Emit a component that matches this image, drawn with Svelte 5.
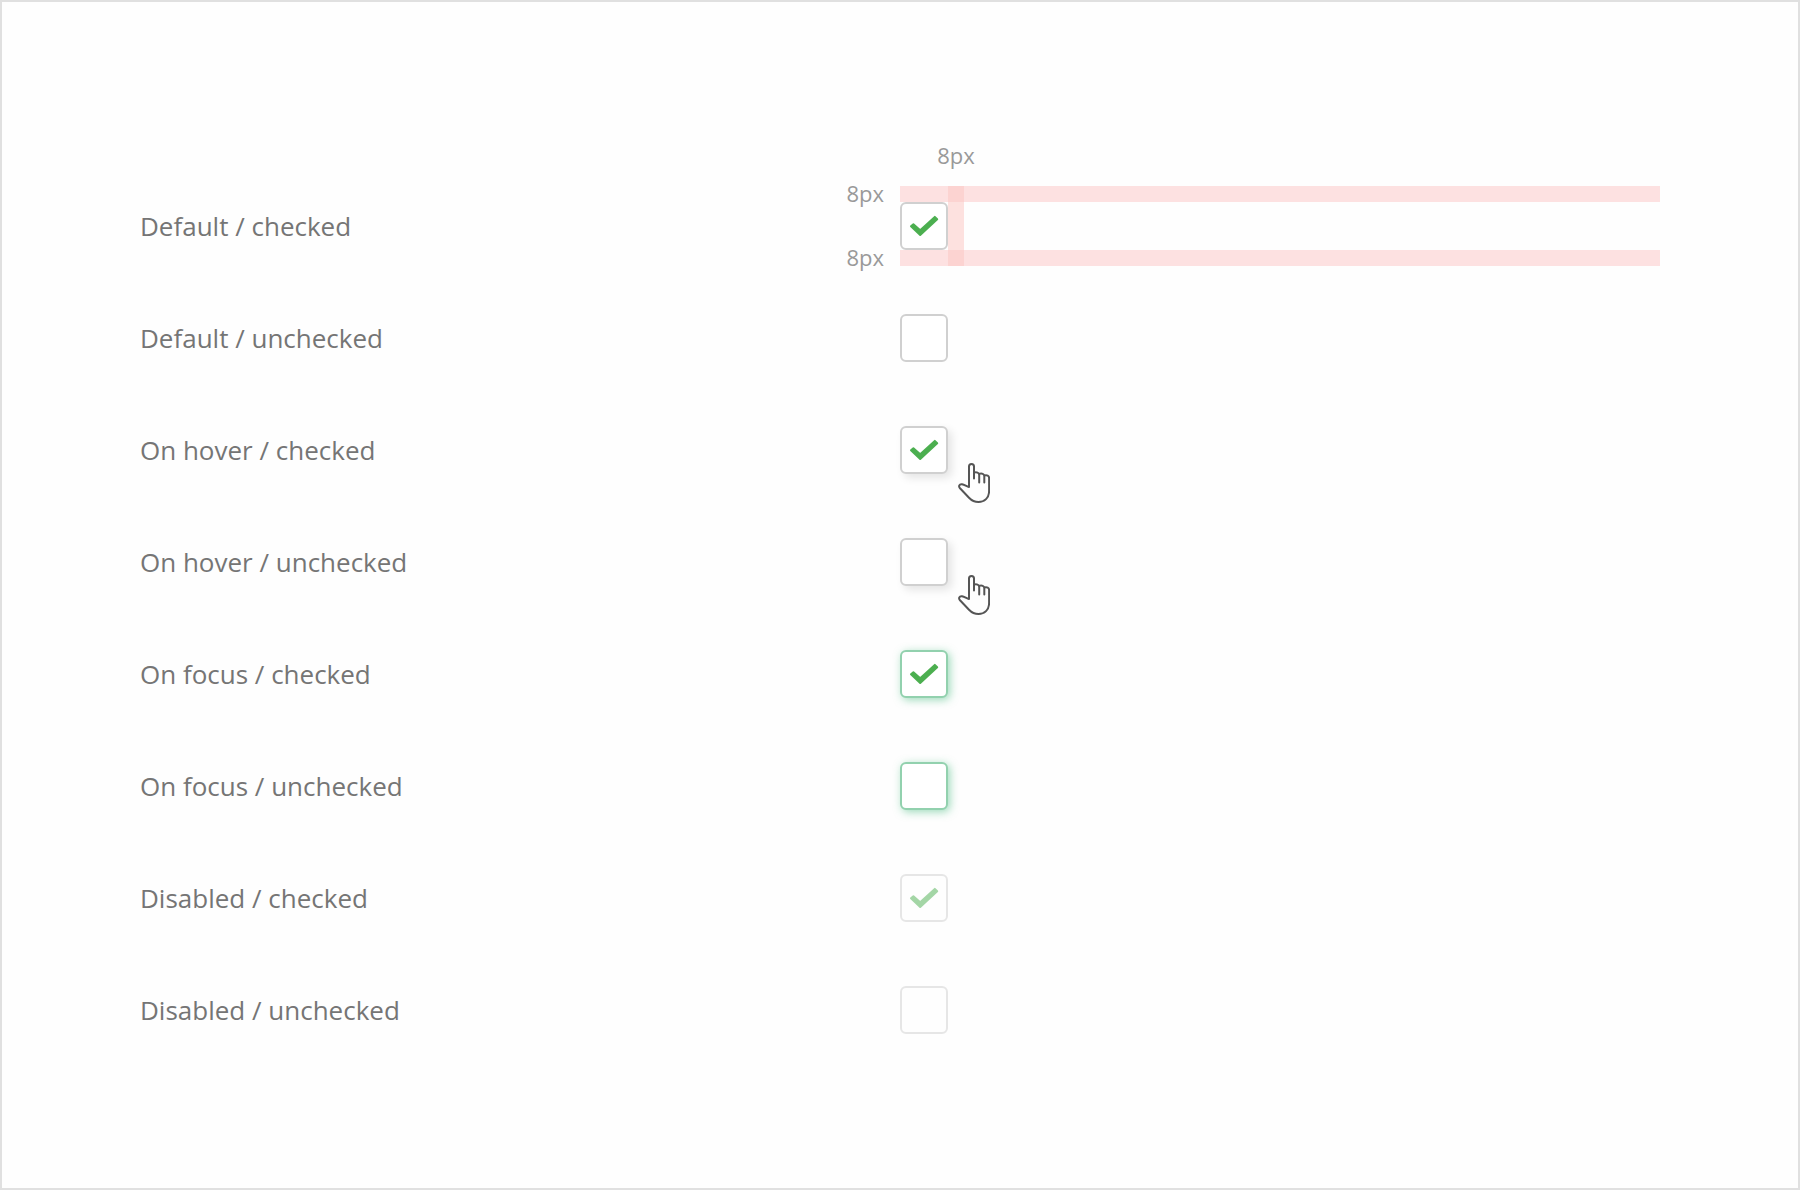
<script>
  const rows = [
    { id: 'default-on', label: 'Default / checked', state: 'default', checked: true, spec: true },
    { id: 'default-off', label: 'Default / unchecked', state: 'default', checked: false },
    { id: 'hover-on', label: 'On hover / checked', state: 'hover', checked: true },
    { id: 'hover-off', label: 'On hover / unchecked', state: 'hover', checked: false },
    { id: 'focus-on', label: 'On focus / checked', state: 'focus', checked: true },
    { id: 'focus-off', label: 'On focus / unchecked', state: 'focus', checked: false },
    { id: 'disabled-on', label: 'Disabled / checked', state: 'disabled', checked: true },
    { id: 'disabled-off', label: 'Disabled / unchecked', state: 'disabled', checked: false }
  ];
</script>

<main class="sheet">
  {#each rows as row (row.id)}
    <div class="row">
      <label for={row.id}>{row.label}</label>
      <div class="cell">
        {#if row.spec}
          <div class="band top"></div>
          <div class="band bottom"></div>
          <div class="band side"></div>
          <span class="note above">8px</span>
          <span class="note upper">8px</span>
          <span class="note lower">8px</span>
        {/if}
        <div class="control {row.state}">
          <input type="checkbox" id={row.id} checked={row.checked} disabled={row.state === 'disabled'} />
          <svg class="tick" viewBox="0 0 48 48" aria-hidden="true">
            <path d="M11 24.200 13.400 22.200 20.200 28.200 34.800 14.900 37.200 17.300 20.200 32.900Z" />
          </svg>
          {#if row.state === 'hover'}
            <svg class="hand" viewBox="0 0 32 40" aria-hidden="true">
              <path
                d="M11 24V3.600a2.500 2.500 0 0 1 5 0V15.500M16 9.600c2.600-.9 5.200.1 5.200 2.400v7.500M21.200 10.900c2.600-.9 5.100.1 5.100 2.300v6.300M26.300 12.500c2.700-.8 4.800.2 4.800 2.500V28c0 7-4.700 11-10.600 11-4 0-6.900-1.600-9.500-4.300L2 25.300C.2 23.300 1.300 20.900 4 21.300c1.800.3 4.200 1.600 7 2.700"
              />
            </svg>
          {/if}
        </div>
      </div>
    </div>
  {/each}
</main>

<style>
  :global(body) {
    margin: 0;
    background: #fefefe;
  }

  .sheet {
    box-sizing: border-box;
    min-height: 100vh;
    padding: 168px 138px 122px;
    border: 2px solid #e0e0e0;
    background: #fefefe;
    font-family: 'Open Sans', 'Noto Sans', sans-serif;
  }

  .row {
    display: grid;
    grid-template-columns: 1fr 1fr;
    align-items: center;
    height: 112px;
  }

  label {
    justify-self: start;
    color: #757575;
    font-size: 26px;
    line-height: 36px;
  }

  .cell {
    position: relative;
    padding: 16px 0;
  }

  .control {
    position: relative;
    width: 48px;
    height: 48px;
  }

  input {
    appearance: none;
    display: block;
    box-sizing: border-box;
    width: 100%;
    height: 100%;
    margin: 0;
    border: 2px solid #d0d0d0;
    border-radius: 6px;
    background: #fff;
  }

  .hover input {
    box-shadow: 4px 4px 8px rgba(0, 0, 0, 0.1);
  }

  .focus input {
    border-color: #92d1ae;
    box-shadow: 2px 2px 8px rgba(60, 184, 120, 0.5);
    outline: none;
  }

  .disabled {
    opacity: 0.5;
  }

  .tick {
    position: absolute;
    inset: 0;
    display: none;
    fill: #4caf50;
    stroke: #4caf50;
    stroke-width: 2;
    stroke-linejoin: round;
    pointer-events: none;
  }

  input:checked + .tick {
    display: block;
  }

  .hand {
    position: absolute;
    top: 37px;
    left: 58px;
    width: 32px;
    height: 40px;
    fill: none;
    stroke: #555;
    stroke-width: 2;
    stroke-linecap: round;
    stroke-linejoin: round;
  }

  .band {
    position: absolute;
    background: #fde1e1;
  }

  .top,
  .bottom {
    left: 0;
    right: 0;
    height: 16px;
  }

  .top {
    top: 0;
  }

  .bottom {
    bottom: 0;
  }

  .side {
    top: 0;
    bottom: 0;
    left: 48px;
    width: 16px;
    background: rgba(251, 198, 195, 0.53);
  }

  .note {
    position: absolute;
    color: #999;
    font-size: 22px;
    line-height: 30px;
  }

  .above {
    left: 56px;
    bottom: 100%;
    margin-bottom: 16px;
    transform: translateX(-50%);
  }

  .upper,
  .lower {
    right: 100%;
    margin-right: 16px;
  }

  .upper {
    top: -8px;
  }

  .lower {
    bottom: -6px;
  }
</style>
